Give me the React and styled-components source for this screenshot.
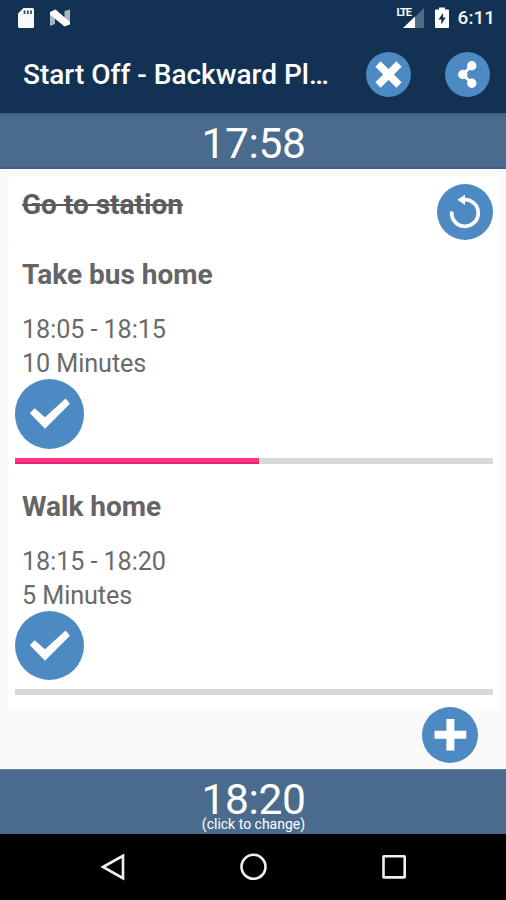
import styled, { createGlobalStyle } from "styled-components";

const GlobalStyle = createGlobalStyle`
  * {
    box-sizing: border-box;
  }
  body {
    margin: 0;
    font-family: Roboto, "Liberation Sans", sans-serif;
  }
`;

const Screen = styled.div`
  width: 506px;
  height: 900px;
  display: flex;
  flex-direction: column;
  background: #fafafa;
  overflow: hidden;
`;

const StatusBar = styled.div`
  height: 35px;
  flex-shrink: 0;
  display: flex;
  align-items: center;
  justify-content: space-between;
  padding: 0 11px 0 17px;
  background: #133253;
`;

const StatusGroup = styled.div`
  display: flex;
  align-items: center;
  gap: ${({ $gap }) => $gap}px;
`;

const Clock = styled.span`
  color: #f4f6f8;
  font-size: 19px;
  font-weight: 500;
  line-height: 20px;
  padding-top: 1px;
  margin-left: -1px;
`;

const AppBar = styled.header`
  height: 78px;
  flex-shrink: 0;
  display: flex;
  align-items: center;
  padding: 0 16px 0 23px;
  background: #133253;
`;

const AppTitle = styled.h1`
  flex: 1;
  margin: 0;
  padding-top: 1px;
  color: #fff;
  font-size: 28px;
  font-weight: 500;
  line-height: 32px;
  white-space: nowrap;
`;

const BarActions = styled.div`
  display: flex;
  gap: 34px;
`;

const RoundButton = styled.button`
  width: ${({ $size }) => $size}px;
  height: ${({ $size }) => $size}px;
  flex-shrink: 0;
  display: block;
  padding: 0;
  border: none;
  border-radius: 50%;
  background: #4d8ac3;
  cursor: pointer;

  svg {
    display: block;
    width: 100%;
    height: 100%;
  }
`;

const TimeBand = styled.div`
  height: ${({ $height }) => $height}px;
  flex-shrink: 0;
  display: flex;
  flex-direction: column;
  align-items: center;
  padding-top: 13px;
  padding-left: 1px;
  color: #fff;
  background: ${({ $edge }) =>
    $edge
      ? "linear-gradient(#3f5f7e, #4a6b8d 4px)"
      : "linear-gradient(#5c7c9b 1px, #4a6b8d 2px)"};
  border-bottom: ${({ $edge }) => ($edge ? "2px solid #3c6085" : "none")};
`;

const BigTime = styled.div`
  font-size: 42.5px;
  line-height: 36px;
  letter-spacing: -0.4px;
`;

const Hint = styled.div`
  margin-top: -2px;
  font-size: 14px;
  line-height: 16px;
`;

const TaskList = styled.main`
  flex: 1;
  display: flex;
  flex-direction: column;
  padding: 7px 6px 0 8px;
`;

const TaskCard = styled.section`
  height: ${({ $done }) => ($done ? 71 : 231.5)}px;
  display: flex;
  flex-direction: ${({ $done }) => ($done ? "row" : "column")};
  justify-content: ${({ $done }) => ($done ? "space-between" : "flex-start")};
  align-items: flex-start;
  padding: ${({ $done }) => ($done ? "8px 7px 0 14px" : "7px 7px 0 6.500px")};
  border-radius: 3px;
  background: #fff;
  box-shadow: 0 0 1px rgba(0, 0, 0, 0.05);
`;

const TaskTitle = styled.h2`
  margin: 0;
  padding-top: 5px;
  padding-left: ${({ $done }) => ($done ? 0 : 7.5)}px;
  color: ${({ $done }) => ($done ? "#5c5c5c" : "#656565")};
  font-size: 28px;
  font-weight: 700;
  line-height: 32px;
  text-decoration: ${({ $done }) => ($done ? "line-through" : "none")};
  text-decoration-thickness: 2px;
`;

const TaskDetails = styled.div`
  padding: 22px 0 0 7.500px;
  margin-bottom: -2px;
  color: #6a6a6a;
  font-size: 25.2px;
  line-height: 34px;
  letter-spacing: -0.08px;
`;

const Track = styled.div`
  width: 478px;
  height: 6px;
  margin-top: 9px;
  background: #d8d8d8;
`;

const Progress = styled.div`
  height: 100%;
  background: #fb3683;
  border-bottom: 2px solid #ee2076;
`;

const AddRow = styled.div`
  display: flex;
  justify-content: flex-end;
  margin-top: -3px;
  padding-right: 22px;
`;

const NavBar = styled.nav`
  height: 66px;
  flex-shrink: 0;
  display: flex;
  justify-content: space-between;
  align-items: center;
  padding: 0 98px 0 99px;
  background: #000;
`;

const SdCardIcon = () => (
  <svg width="18" height="22" viewBox="0 0 18 22">
    <path
      d="M6.5 1H15.5Q17 1 17 2.5V19.5Q17 21 15.5 21H2.5Q1 21 1 19.5V6.5Z"
      fill="#f7f9fb"
    />
    <path d="M7.5 3.5V7M10.8 3.5V7M14 3.5V7" stroke="#26415f" strokeWidth="1.7" />
  </svg>
);

const NougatIcon = () => (
  <svg width="22" height="18" viewBox="0 0 22 18">
    <path d="M1 3L6 6V15L1 17ZM15.500 2L21 .5V15L15.500 11Z" fill="#a9b5c2" />
    <path d="M1 3L6.500 .5L21 13V15.500L15.500 17.500L1 5.500Z" fill="#fff" />
  </svg>
);

const SignalGroup = styled.div`
  display: flex;
  align-items: flex-end;
  width: 28px;
  height: 22px;
  position: relative;
`;

const NetworkLabel = styled.span`
  position: absolute;
  left: 0;
  top: 0;
  color: #fff;
  font-size: 11px;
  font-weight: 700;
  line-height: 11px;
  letter-spacing: -1.2px;
`;

const Signal = () => (
  <SignalGroup>
    <svg width="28" height="22" viewBox="0 0 28 22">
      <path d="M18 10L27 1V21H18Z" fill="#526b85" />
      <path d="M6 21L18 9.500V21Z" fill="#fff" />
    </svg>
    <NetworkLabel>LTE</NetworkLabel>
  </SignalGroup>
);

const BatteryIcon = () => (
  <svg width="16" height="22" viewBox="0 0 16 22">
    <path d="M5 .5H11V2.500H14Q15 2.500 15 3.500V20Q15 21 14 21H2Q1 21 1 20V3.500Q1 2.500 2 2.500H5Z" fill="#fff" />
    <path d="M9 6L4.500 12.500H7.300V17.500L11.700 10.500H9Z" fill="#133253" />
  </svg>
);

const CloseIcon = () => (
  <svg viewBox="0 0 45 45">
    <path d="M12 12L33 33M33 12L12 33" stroke="#fff" strokeWidth="7.500" />
  </svg>
);

const ShareIcon = () => (
  <svg viewBox="0 0 45 45">
    <path d="M26.800 13.700L17.800 22.500L26.800 31.300" fill="none" stroke="#fff" strokeWidth="3" />
    <circle cx="26.800" cy="13.700" r="4.700" fill="#fff" />
    <circle cx="17.800" cy="22.500" r="4.700" fill="#fff" />
    <circle cx="26.800" cy="31.300" r="4.700" fill="#fff" />
  </svg>
);

const UndoIcon = () => (
  <svg viewBox="0 0 56 56">
    <path d="M14.700 27.500A13.300 13.300 0 1 0 28 15.700H25" fill="none" stroke="#fff" strokeWidth="3.700" />
    <path d="M20.300 15.800L28 10.800V21Z" fill="#fff" />
  </svg>
);

const CheckIcon = () => (
  <svg viewBox="0 0 70 70">
    <path d="M15 34.500L19.700 29.500L30.200 38.500L51 19.700L55.300 25L30.200 50Z" fill="#fff" />
  </svg>
);

const PlusIcon = () => (
  <svg viewBox="0 0 56 56">
    <path d="M12.500 27.700H44.300M28.400 12V43.500" stroke="#fff" strokeWidth="8" />
  </svg>
);

const BackIcon = () => (
  <svg width="27" height="28" viewBox="0 0 27 28">
    <path d="M4 14L24 2.800V25.200Z" fill="none" stroke="#f0f0f0" strokeWidth="2.600" />
  </svg>
);

const HomeIcon = () => (
  <svg width="28" height="28" viewBox="0 0 28 28">
    <circle cx="14.500" cy="13.800" r="12" fill="none" stroke="#f0f0f0" strokeWidth="2.600" />
  </svg>
);

const RecentsIcon = () => (
  <svg width="28" height="28" viewBox="0 0 28 28">
    <rect x="3.500" y="3.200" width="21.200" height="21.200" rx="0.500" fill="none" stroke="#f0f0f0" strokeWidth="2.600" />
  </svg>
);

const tasks = [
  { title: "Go to station", done: true },
  { title: "Take bus home", time: "18:05 - 18:15", duration: "10 Minutes", progress: 51.1 },
  { title: "Walk home", time: "18:15 - 18:20", duration: "5 Minutes", progress: 0 },
];

const Task = ({ task }) => {
  if (task.done) {
    return (
      <TaskCard $done>
        <TaskTitle $done>{task.title}</TaskTitle>
        <RoundButton $size={56} aria-label="Undo">
          <UndoIcon />
        </RoundButton>
      </TaskCard>
    );
  }
  return (
    <TaskCard>
      <TaskTitle>{task.title}</TaskTitle>
      <TaskDetails>
        <div>{task.time}</div>
        <div>{task.duration}</div>
      </TaskDetails>
      <RoundButton $size={69.5} aria-label="Done">
        <CheckIcon />
      </RoundButton>
      <Track>
        {task.progress > 0 && <Progress style={{ width: `${task.progress}%` }} />}
      </Track>
    </TaskCard>
  );
};

export default function App() {
  return (
    <>
      <GlobalStyle />
      <Screen>
        <StatusBar>
          <StatusGroup $gap={14}>
            <SdCardIcon />
            <NougatIcon />
          </StatusGroup>
          <StatusGroup $gap={9}>
            <Signal />
            <BatteryIcon />
            <Clock>6:11</Clock>
          </StatusGroup>
        </StatusBar>
        <AppBar>
          <AppTitle>Start Off - Backward Pl…</AppTitle>
          <BarActions>
            <RoundButton $size={45} aria-label="Close">
              <CloseIcon />
            </RoundButton>
            <RoundButton $size={45} aria-label="Share">
              <ShareIcon />
            </RoundButton>
          </BarActions>
        </AppBar>
        <TimeBand $height={56} $edge>
          <BigTime>17:58</BigTime>
        </TimeBand>
        <TaskList>
          {tasks.map((task) => (
            <Task key={task.title} task={task} />
          ))}
          <AddRow>
            <RoundButton $size={56} aria-label="Add">
              <PlusIcon />
            </RoundButton>
          </AddRow>
        </TaskList>
        <TimeBand $height={65}>
          <BigTime>18:20</BigTime>
          <Hint>(click to change)</Hint>
        </TimeBand>
        <NavBar>
          <BackIcon />
          <HomeIcon />
          <RecentsIcon />
        </NavBar>
      </Screen>
    </>
  );
}
